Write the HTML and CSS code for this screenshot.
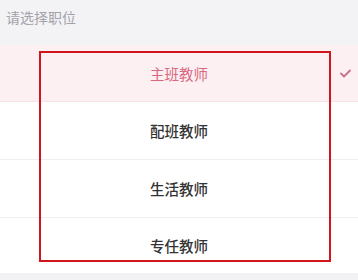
FILE: index.html
```html
<!DOCTYPE html>
<html lang="zh">
<head>
<meta charset="utf-8">
<link rel="stylesheet" href="styles.css">
</head>
<body>
<div class="page">
  <div class="header">请选择职位</div>
  <ul class="list">
    <li class="item active"><span>主班教师</span>
      <svg class="check" width="11" height="9" viewBox="0 0 11 9"><path d="M1 4.5 L4 7.5 L10 1.5" fill="none" stroke="#c8728a" stroke-width="1.8" stroke-linecap="round" stroke-linejoin="round"/></svg>
    </li>
    <li class="item"><span>配班教师</span></li>
    <li class="item"><span>生活教师</span></li>
    <li class="item"><span>专任教师</span></li>
  </ul>
  <div class="footer"></div>
  <div class="highlight"></div>
</div>
</body>
</html>
```
FILE: styles.css
```css
html, body {
  margin: 0;
  padding: 0;
  background: #f3f2f5;
}
.page {
  position: relative;
  width: 358px;
  height: 280px;
  overflow: hidden;
  font-family: "Noto Sans CJK SC", "Noto Sans", sans-serif;
}
.header {
  height: 45px;
  box-sizing: border-box;
  padding: 7px 0 0 6px;
  font-size: 14px;
  line-height: 20px;
  color: #a3a3aa;
  background: #f3f2f5;
}
.list {
  list-style: none;
  margin: 0;
  padding: 0;
  background: #fff;
}
.item {
  position: relative;
  height: 57px;
  display: flex;
  align-items: center;
  justify-content: center;
  font-size: 14.5px;
  font-weight: 500;
  color: #333;
  border-top: 1px solid #efeff1;
  box-sizing: border-box;
}
.item:first-child {
  border-top: none;
}
.item:nth-child(3) {
  height: 58px;
}
.item:last-child {
  height: 56px;
}
.item.active {
  background: #fdf0f3;
  color: #d8687f;
  font-weight: 400;
  border-bottom: 1px solid #f8e3e8;
}
.item.active + .item {
  border-top: none;
}
.check {
  position: absolute;
  right: 7px;
  top: 24px;
}
.footer {
  height: 10px;
  background: #f2f2f4;
}
.highlight {
  position: absolute;
  left: 39px;
  top: 51px;
  width: 292px;
  height: 211px;
  box-sizing: border-box;
  border: 2px solid #d0161c;
}
```
